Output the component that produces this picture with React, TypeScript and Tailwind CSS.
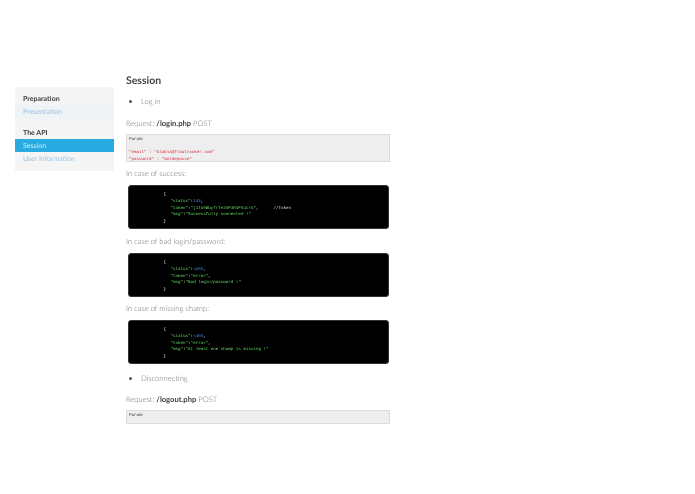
const mono = "font-['Liberation_Mono',monospace]";

function Req({ path, first }: { path: string; first?: boolean }) {
  return (
    <p className={`text-[7.6px] leading-[12px] text-[#707070] ${first ? "mt-[10px]" : "mt-[9px]"}`}>
      Request: <strong className="font-bold text-[#404040]">{path}</strong> POST
    </p>
  );
}

function Line({ children, indent = 0 }: { children: React.ReactNode; indent?: number }) {
  return (
    <div className="h-[6.8px] whitespace-pre" style={{ paddingLeft: indent }}>
      {children}
    </div>
  );
}

function Dark({ status, token, msg, comment }: { status: string; token: string; msg: string; comment?: boolean }) {
  return (
    <div className={`mx-[1.5px] mt-[6px] h-[44px] rounded-[3px] bg-black border border-[#333] pt-[6px] text-[4.2px] leading-[6.8px] font-normal text-[#eee] ${mono}`}>
      <Line indent={35}>{"{"}</Line>
      <Line indent={42}>
        <span className="text-[#66dd66]">"status"</span>:<span className="text-[#4a8fe0]">{status}</span>,
      </Line>
      <Line indent={42}>
        <span className="text-[#66dd66]">"token"</span>:<span className="text-[#66dd66]">"{token}"</span>,
        {comment ? <span className="text-[#ddd]">{"      //Token"}</span> : null}
      </Line>
      <Line indent={42}>
        <span className="text-[#66dd66]">"msg"</span>:<span className="text-[#66dd66]">"{msg}"</span>
      </Line>
      <Line indent={35}>{"}"}</Line>
    </div>
  );
}

export default function App() {
  return (
    <div className="flex items-start w-[695px] h-[494px] overflow-hidden bg-white pl-[15px] font-['Lato','Open_Sans',sans-serif] font-light blur-[0.25px] [text-rendering:geometricPrecision]">
      <aside className="w-[99px] mt-[87px] shrink-0 bg-[#f5f5f5] pt-[5px] pb-[6px] text-[7px] leading-[15px]">
        <div className="pl-[8px] h-[13px] font-bold text-[#404040]">Preparation</div>
        <div className="pl-[8px] h-[14px] bg-[#eef3f6] font-normal text-[#9cc6e2]">Presentation</div>
        <div className="pl-[8px] h-[13px] mt-[7px] font-bold text-[#404040]">The API</div>
        <div className="pl-[8px] h-[13px] bg-[#29abe2] font-normal text-[#c9ecfa]">Session</div>
        <div className="pl-[8px] h-[13px] font-normal text-[#9cc6e2]">User Information</div>
      </aside>
      <main className="w-[264px] ml-[12px] pt-[74px]">
        <h1 className="text-[10.5px] leading-[14px] font-bold text-[#444]">Session</h1>
        <ul className="list-disc marker:text-[#555] pl-[15px] mt-[7px] text-[7.6px] leading-[12px] text-[#707070]">
          <li>Log in</li>
        </ul>
        <Req path="/login.php" first />
        <div className={`mt-[5px] h-[28px] bg-[#eee] border border-[#ddd] px-[2px] pt-[2px] text-[4.2px] leading-[6.7px] font-normal ${mono}`}>
          <div className="text-[#333]">Param:</div>
          <div className="h-[6.7px]" />
          <div className="text-[#e02a3f]">"email" : "blabla@flowtracker.com"</div>
          <div className="text-[#e02a3f]">"password" : "motdepasse"</div>
        </div>
        <p className="text-[7.6px] leading-[12px] text-[#707070] mt-[5px]">In case of success:</p>
        <Dark status="142" token="j1fu9Bbyfrfe34F3R3FSutr5" msg="Successfully connected !" comment />
        <p className="text-[7.6px] leading-[12px] text-[#707070] mt-[6px]">In case of bad login/password:</p>
        <Dark status="s282" token="error" msg="Bad login/password !" />
        <p className="text-[7.6px] leading-[12px] text-[#707070] mt-[5px]">In case of missing champ:</p>
        <Dark status="s404" token="error" msg="At least one champ is missing !" />
        <ul className="list-disc marker:text-[#555] pl-[15px] mt-[8px] text-[7.6px] leading-[12px] text-[#707070]">
          <li>Disconnecting</li>
        </ul>
        <Req path="/logout.php" />
        <div className={`mt-[5px] h-[14px] bg-[#eee] border border-[#ddd] px-[2px] pt-[2px] text-[4.2px] leading-[6.7px] font-normal text-[#333] ${mono}`}>
          Param:
        </div>
      </main>
    </div>
  );
}
